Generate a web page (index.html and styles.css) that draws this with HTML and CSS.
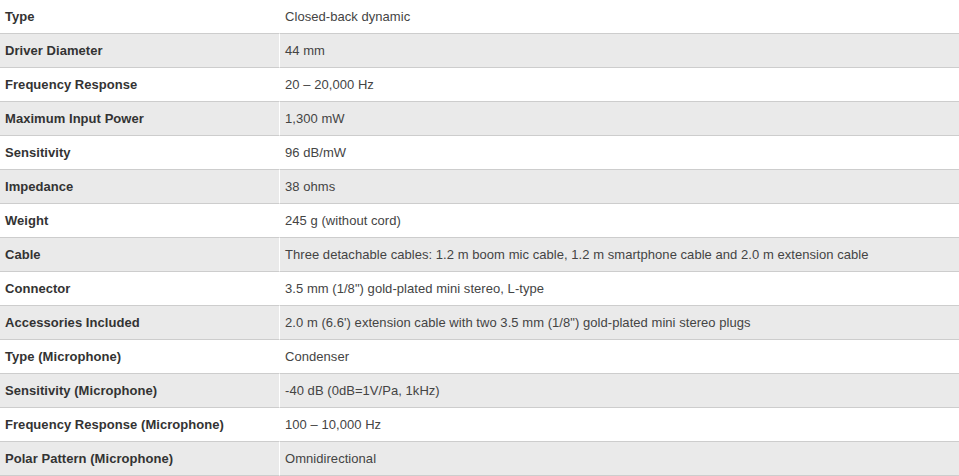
FILE: index.html
```html
<!DOCTYPE html>
<html>
<head>
<meta charset="utf-8">
<link rel="stylesheet" href="styles.css">
</head>
<body>
<table class="specs">
<tbody>
<tr><td class="label">Type</td><td class="value">Closed-back dynamic</td></tr>
<tr><td class="label">Driver Diameter</td><td class="value">44 mm</td></tr>
<tr><td class="label">Frequency Response</td><td class="value">20 – 20,000 Hz</td></tr>
<tr><td class="label">Maximum Input Power</td><td class="value">1,300 mW</td></tr>
<tr><td class="label">Sensitivity</td><td class="value">96 dB/mW</td></tr>
<tr><td class="label">Impedance</td><td class="value">38 ohms</td></tr>
<tr><td class="label">Weight</td><td class="value">245 g (without cord)</td></tr>
<tr><td class="label">Cable</td><td class="value">Three detachable cables: 1.2 m boom mic cable, 1.2 m smartphone cable and 2.0 m extension cable</td></tr>
<tr><td class="label">Connector</td><td class="value">3.5 mm (1/8") gold-plated mini stereo, L-type</td></tr>
<tr><td class="label">Accessories Included</td><td class="value">2.0 m (6.6') extension cable with two 3.5 mm (1/8") gold-plated mini stereo plugs</td></tr>
<tr><td class="label">Type (Microphone)</td><td class="value">Condenser</td></tr>
<tr><td class="label">Sensitivity (Microphone)</td><td class="value">-40 dB (0dB=1V/Pa, 1kHz)</td></tr>
<tr><td class="label">Frequency Response (Microphone)</td><td class="value">100 – 10,000 Hz</td></tr>
<tr><td class="label">Polar Pattern (Microphone)</td><td class="value">Omnidirectional</td></tr>
</tbody>
</table>
</body>
</html>
```
FILE: styles.css
```css
html, body {
  margin: 0;
  padding: 0;
  background: #fff;
}
.specs {
  width: 100%;
  border-collapse: separate;
  border-spacing: 0;
  font-family: "Liberation Sans", Arial, sans-serif;
  font-size: 13px;
  line-height: 15px;
  letter-spacing: 0.05px;
}
.specs td {
  padding: 9px 5px;
  border-bottom: 1px solid #cdcdcd;
  text-align: left;
  vertical-align: middle;
}
.specs tr:nth-child(even) td {
  background: #eaeaea;
}
.specs .label {
  width: 269px;
  border-right: 1px solid #fff;
  font-weight: bold;
  color: #333;
}
.specs .value {
  color: #444;
}
```
